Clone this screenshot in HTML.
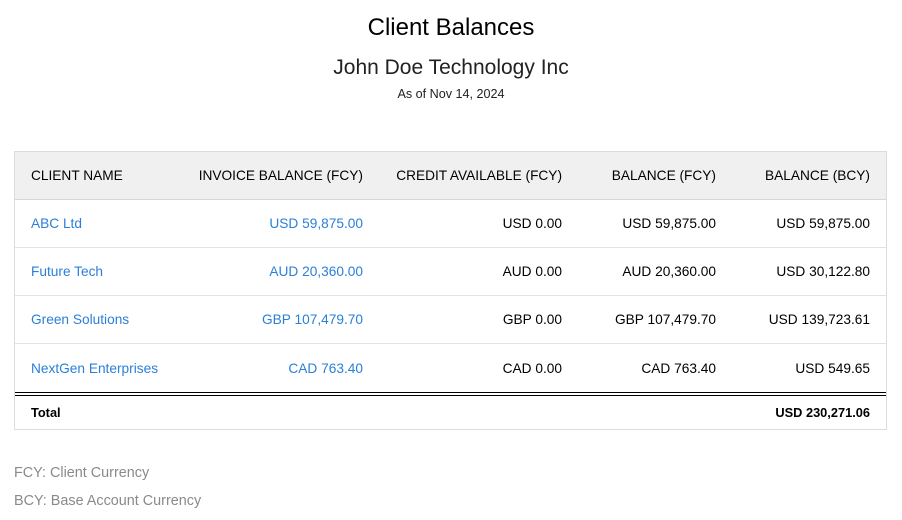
<!DOCTYPE html>
<html><head><meta charset="utf-8"><style>
body{margin:0;width:902px;height:520px;background:#fff;font-family:"Liberation Sans",Arial,sans-serif;color:#000;position:relative;overflow:hidden}
.a{position:absolute;white-space:nowrap}
.c{left:0;width:902px;text-align:center}
.r{text-align:right}
.t{font-size:13.7px}
.b{color:#2a7fd8}
.hl{position:absolute;left:15px;width:871px;height:1px;background:#e3e3e3}
</style></head><body>
<div class="a c" style="top:14px;font-size:24px">Client Balances</div>
<div class="a c" style="top:56px;font-size:21px;color:#222">John Doe Technology Inc</div>
<div class="a c" style="top:87px;font-size:12.6px;color:#222">As of Nov 14, 2024</div>

<div style="position:absolute;left:14px;top:151px;width:871px;height:277px;border:1px solid #dcdcdc"></div>
<div style="position:absolute;left:15px;top:152px;width:871px;height:47px;background:#f0f0f0;border-bottom:1px solid #d6d6d6"></div>
<div class="hl" style="top:247px"></div>
<div class="hl" style="top:295px"></div>
<div class="hl" style="top:343px"></div>
<div style="position:absolute;left:15px;top:392px;width:871px;height:1px;background:#000"></div>
<div style="position:absolute;left:15px;top:395px;width:871px;height:1px;background:#000"></div>

<div class="a t" style="left:31px;top:168px">CLIENT NAME</div>
<div class="a t r" style="right:539px;top:168px">INVOICE BALANCE (FCY)</div>
<div class="a t r" style="right:340px;top:168px">CREDIT AVAILABLE (FCY)</div>
<div class="a t r" style="right:186px;top:168px">BALANCE (FCY)</div>
<div class="a t r" style="right:32px;top:168px">BALANCE (BCY)</div>

<div class="a t b" style="left:31px;top:216px">ABC Ltd</div>
<div class="a t b" style="right:539px;top:216px">USD 59,875.00</div>
<div class="a t" style="right:340px;top:216px">USD 0.00</div>
<div class="a t" style="right:186px;top:216px">USD 59,875.00</div>
<div class="a t" style="right:32px;top:216px">USD 59,875.00</div>

<div class="a t b" style="left:31px;top:264px">Future Tech</div>
<div class="a t b" style="right:539px;top:264px">AUD 20,360.00</div>
<div class="a t" style="right:340px;top:264px">AUD 0.00</div>
<div class="a t" style="right:186px;top:264px">AUD 20,360.00</div>
<div class="a t" style="right:32px;top:264px">USD 30,122.80</div>

<div class="a t b" style="left:31px;top:312px">Green Solutions</div>
<div class="a t b" style="right:539px;top:312px">GBP 107,479.70</div>
<div class="a t" style="right:340px;top:312px">GBP 0.00</div>
<div class="a t" style="right:186px;top:312px">GBP 107,479.70</div>
<div class="a t" style="right:32px;top:312px">USD 139,723.61</div>

<div class="a t b" style="left:31px;top:361px">NextGen Enterprises</div>
<div class="a t b" style="right:539px;top:361px">CAD 763.40</div>
<div class="a t" style="right:340px;top:361px">CAD 0.00</div>
<div class="a t" style="right:186px;top:361px">CAD 763.40</div>
<div class="a t" style="right:32px;top:361px">USD 549.65</div>

<div class="a" style="left:31px;top:405px;font-size:12.8px;font-weight:bold">Total</div>
<div class="a" style="right:32px;top:405px;font-size:12.8px;font-weight:bold">USD 230,271.06</div>

<div class="a" style="left:14px;top:465px;font-size:14.4px;color:#8a8a8a">FCY: Client Currency</div>
<div class="a" style="left:14px;top:493px;font-size:14.4px;color:#8a8a8a">BCY: Base Account Currency</div>
</body></html>
